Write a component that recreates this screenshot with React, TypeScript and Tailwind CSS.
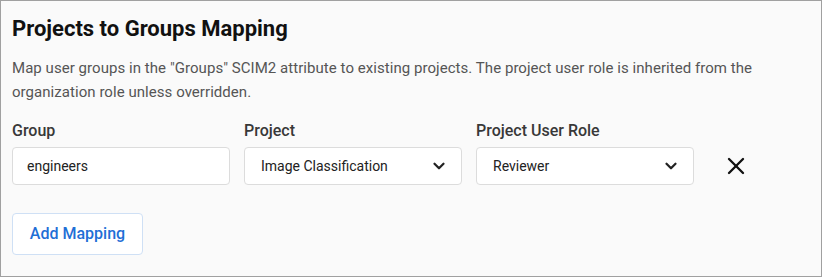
import { ChevronDown, X } from "lucide-react";

function SelectBox({ value }: { value: string }) {
	return (
		<div className="flex h-[38px] w-[218px] items-center justify-between rounded-[4px] border border-[#dcdcdc] bg-white pl-[16px] pr-[13px] text-[14px] text-[#222]">
			<span>{value}</span>
			<ChevronDown className="size-[18px] text-[#222]" strokeWidth={3} />
		</div>
	);
}

export default function App() {
	return (
		<div
			className="h-[277px] w-[822px] border border-[#a0a0a0] bg-[#fafafa] px-[11px] pt-[14px]"
			style={{ fontFamily: "Roboto, 'Liberation Sans', sans-serif" }}
		>
			<h2 className="text-[22px] font-bold leading-[28px] text-[#111]">
				Projects to Groups Mapping
			</h2>
			<p className="mt-[13px] max-w-[790px] text-[15px] leading-[24px] tracking-[0.05px] text-[#555]">
				Map user groups in the "Groups" SCIM2 attribute to existing projects. The
				project user role is inherited from the organization role unless
				overridden.
			</p>

			<div className="mt-[17px] flex items-end gap-[14px]">
				<div className="flex flex-col gap-[6px]">
					<label className="text-[16px] font-medium leading-[20px] text-[#383838]">
						Group
					</label>
					<div className="flex h-[38px] w-[218px] items-center rounded-[4px] border border-[#dcdcdc] bg-white px-[14px] text-[14px] text-[#222]">
						engineers
					</div>
				</div>
				<div className="flex flex-col gap-[6px]">
					<label className="text-[16px] font-medium leading-[20px] text-[#383838]">
						Project
					</label>
					<SelectBox value="Image Classification" />
				</div>
				<div className="flex flex-col gap-[6px]">
					<label className="text-[16px] font-medium leading-[20px] text-[#383838]">
						Project User Role
					</label>
					<SelectBox value="Reviewer" />
				</div>
				<button
					type="button"
					className="ml-[6px] flex h-[38px] w-[44px] items-center justify-center text-[#111]"
				>
					<X className="size-[28px]" strokeWidth={2} />
				</button>
			</div>

			<button
				type="button"
				className="mt-[28px] h-[42px] w-[131px] rounded-[4px] border border-[#cfe0f5] bg-white text-[16px] font-medium text-[#1f6fd6]"
			>
				Add Mapping
			</button>
		</div>
	);
}
